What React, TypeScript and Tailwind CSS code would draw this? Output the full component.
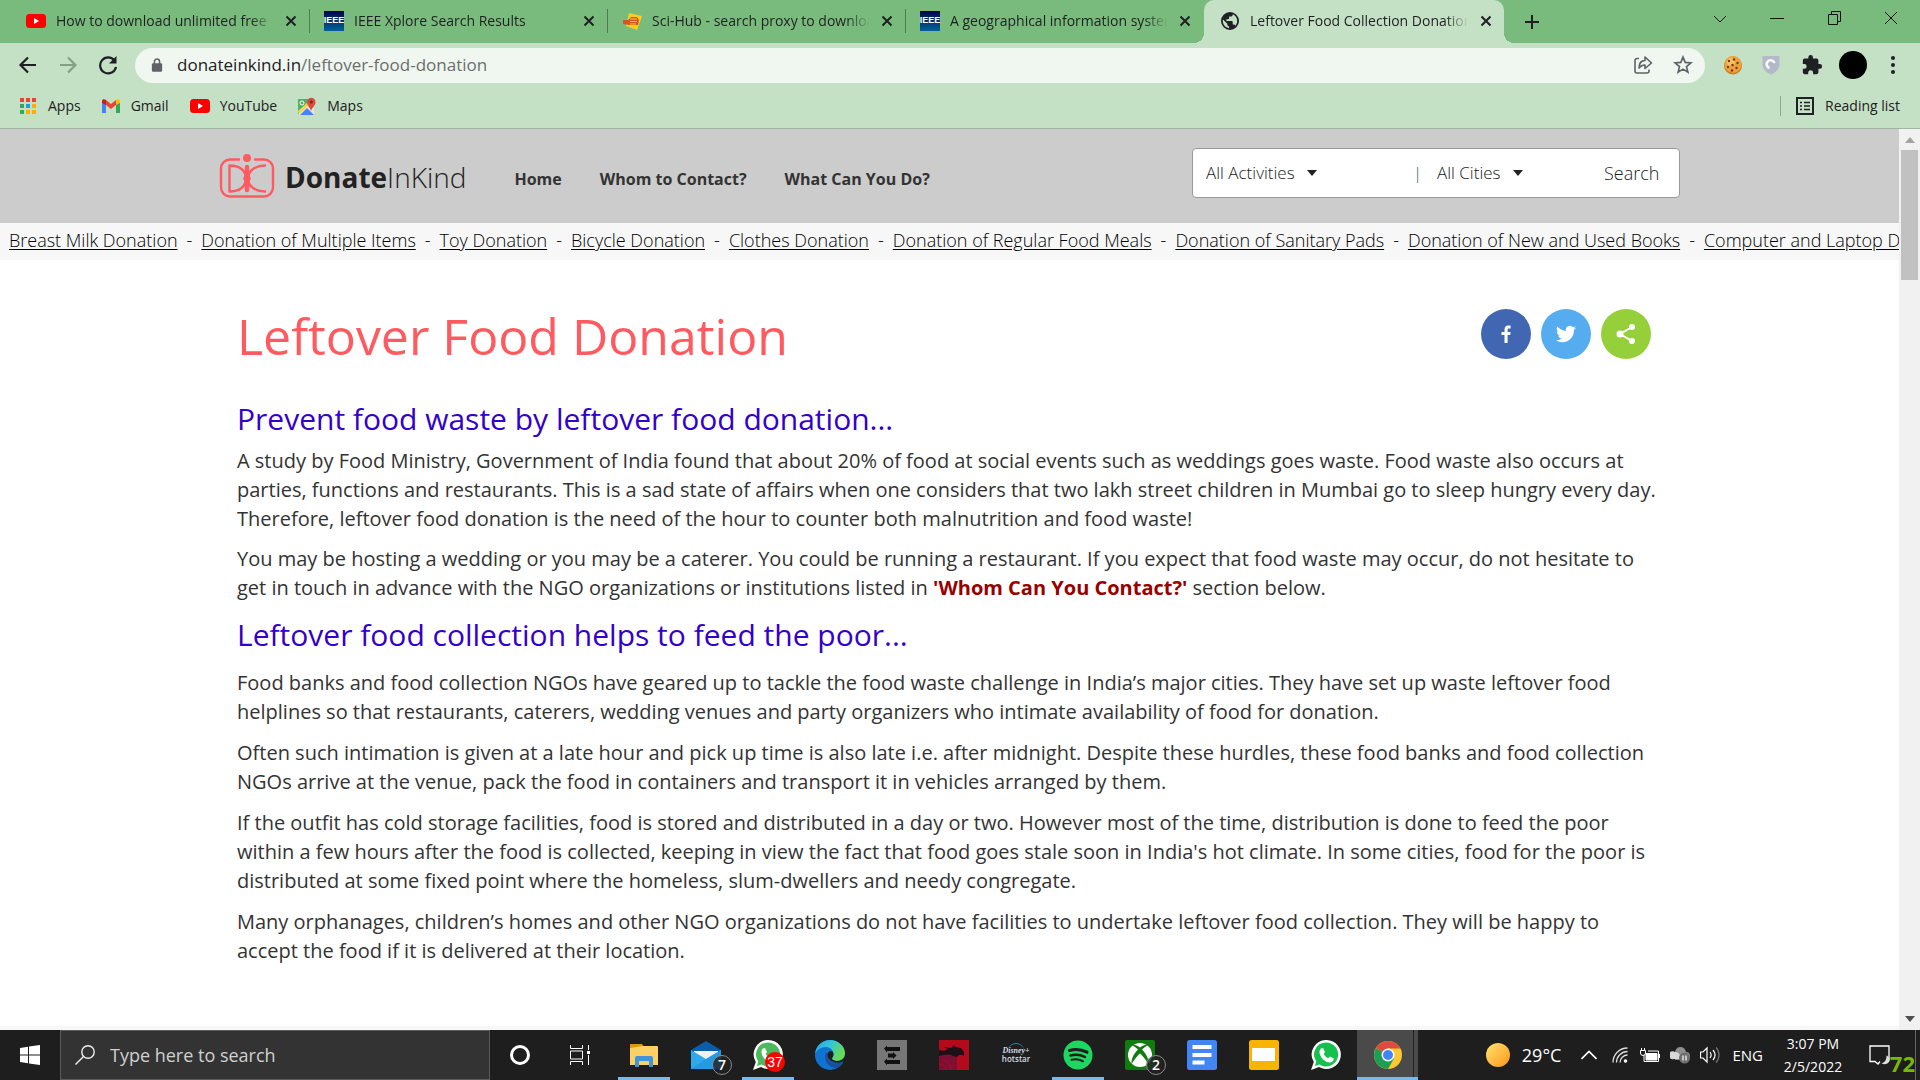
import type { ReactNode } from "react";

function YouTube({ className = "w-5 h-5" }: { className?: string }) {
  return (
    <svg viewBox="0 0 20 20" className={className} aria-hidden="true">
      <rect x="0" y="3" width="20" height="14" rx="3.5" fill="#f00" />
      <path d="M8 7v6l5-3z" fill="#fff" />
    </svg>
  );
}

function Ieee() {
  return (
    <span className="flex h-5 w-5 items-center justify-center bg-linear-to-b from-[#00004e] to-[#00629b] font-['Liberation_Sans',sans-serif] text-[9px] font-bold text-white">
      IEEE
    </span>
  );
}

function SciHub() {
  return (
    <svg viewBox="0 0 20 20" className="h-5 w-5" aria-hidden="true">
      <path d="M7 2l13 3-5 14-11-4z" fill="#f9cf1f" />
      <path d="M1 9h5l3-3h6l2 3-1 5H7l-6-1z" fill="#d9541e" />
      <path d="M8 8h7M8 10.500h7M8 13h6" stroke="#f9cf1f" strokeWidth="1" />
    </svg>
  );
}

function Globe() {
  return (
    <svg viewBox="2 2 20 20" className="h-[18px] w-[18px]" fill="#1f2023" aria-hidden="true">
      <path d="M12 2a10 10 0 1 0 0 20 10 10 0 0 0 0-20zm-1 17.930C7.050 19.440 4 16.080 4 12c0-.620.080-1.210.210-1.790L9 15v1c0 1.100.900 2 2 2v1.930zm6.900-2.540A2 2 0 0 0 16 16h-1v-3c0-.550-.450-1-1-1H8v-2h2c.550 0 1-.450 1-1V7h2c1.100 0 2-.900 2-2v-.410A8 8 0 0 1 17.900 17.390z" />
    </svg>
  );
}

function Cross({ label }: { label: string }) {
  return (
    <button aria-label={label} className="flex h-5 w-5 shrink-0 items-center justify-center">
      <svg viewBox="0 0 12 12" className="h-3 w-3" stroke="#1f2023" strokeWidth="2" aria-hidden="true">
        <path d="M1.500 1.500l9 9M10.500 1.500l-9 9" />
      </svg>
    </button>
  );
}

const tabs: { title: string; icon: ReactNode; active?: boolean }[] = [
  { title: "How to download unlimited free", icon: <YouTube /> },
  { title: "IEEE Xplore Search Results", icon: <Ieee /> },
  { title: "Sci-Hub - search proxy to download", icon: <SciHub /> },
  { title: "A geographical information system", icon: <Ieee /> },
  { title: "Leftover Food Collection Donation", icon: <Globe />, active: true },
];

function TabBar() {
  return (
    <div className="flex h-[43px] items-stretch bg-[#79bb7c] pl-3 text-[#1f2023]">
      {tabs.map((t, i) => (
        <div
          key={t.title}
          className={
            t.active
              ? "relative flex w-[300px] items-center rounded-t-[10px] bg-[#c4e1c5] pr-2 pb-0.5 pl-4"
              : "flex w-[298px] items-center pb-0.5 pl-3.5"
          }
        >
          {t.active && (
            <>
              <span className="absolute bottom-0 -left-2.5 h-2.5 w-2.5 bg-[radial-gradient(circle_at_0_0,#79bb7c_10px,#c4e1c5_10px)]" />
              <span className="absolute -right-2.5 bottom-0 h-2.5 w-2.5 bg-[radial-gradient(circle_at_100%_0,#79bb7c_10px,#c4e1c5_10px)]" />
            </>
          )}
          <span className="flex w-5 shrink-0 justify-center">{t.icon}</span>
          <span className="ml-2.5 min-w-0 flex-1 overflow-hidden text-sm whitespace-nowrap [mask-image:linear-gradient(to_right,black_195px,transparent_218px)]">
            {t.title}
          </span>
          <span className={t.active ? "ml-1" : "mr-2 ml-1"}>
            <Cross label={`Close ${t.title}`} />
          </span>
          {!t.active && <span className={i < 3 ? "h-6 w-px bg-[#4b7d4e]" : "h-6 w-px"} />}
        </div>
      ))}
      <button aria-label="New tab" className="ml-3 flex w-8 items-center justify-center">
        <svg viewBox="0 0 16 16" className="h-4 w-4" stroke="#1f2023" strokeWidth="2" aria-hidden="true">
          <path d="M8 1v14M1 8h14" />
        </svg>
      </button>
      <div className="mr-px ml-auto flex h-9">
        {[
          ["Search tabs", "M1 5l6 6 6-6"],
          ["Minimize", "M0 7.500h14"],
          ["Restore", "M1.500 3.500h9v10h-9zM4.500 3.500v-3h9v10h-3"],
          ["Close window", "M1 1l12 12M13 1L1 13"],
        ].map(([label, d]) => (
          <button key={label} aria-label={label} className="flex w-[57px] items-center justify-center">
            <svg viewBox="0 0 14 14" className="h-3.5 w-3.5" fill="none" stroke="#111" aria-hidden="true">
              <path d={d} />
            </svg>
          </button>
        ))}
      </div>
    </div>
  );
}

function Toolbar() {
  return (
    <div className="flex h-11 items-center pr-[17px] pl-[18px]">
      <button aria-label="Back" className="mr-5 h-5 w-5">
        <svg viewBox="0 0 20 20" fill="none" stroke="#1f2023" strokeWidth="2.200" aria-hidden="true">
          <path d="M18 10H3M10 2.500L2.500 10l7.500 7.500" />
        </svg>
      </button>
      <button aria-label="Forward" className="mr-5 h-5 w-5">
        <svg viewBox="0 0 20 20" fill="none" stroke="#84a086" strokeWidth="2.200" aria-hidden="true">
          <path d="M2 10h15M10 2.500l7.500 7.500-7.500 7.500" />
        </svg>
      </button>
      <button aria-label="Reload" className="mr-[17px] h-5 w-5">
        <svg viewBox="0 0 20 20" fill="none" stroke="#1f2023" strokeWidth="2.200" aria-hidden="true">
          <path d="M16.500 5.500A8 8 0 1 0 18 12" />
          <path d="M18.500 1v7.500H11z" fill="#1f2023" stroke="none" />
        </svg>
      </button>
      <form className="flex h-[35px] flex-1 items-center rounded-full bg-[#f0f7f0] pr-3">
        <svg viewBox="0 0 14 16" className="mr-3.5 ml-4 h-4 w-3" fill="#5f6368" aria-hidden="true">
          <rect x="1" y="6" width="12" height="10" rx="1.500" />
          <path d="M4 7V4a3 3 0 0 1 6 0v3" fill="none" stroke="#5f6368" strokeWidth="1.800" />
        </svg>
        <span className="flex-1 text-[17px] text-[#6a6f6d]">
          <span className="text-[#1f2023]">donateinkind.in</span>/leftover-food-donation
        </span>
        <button type="button" aria-label="Share" className="mr-5 h-5 w-5">
          <svg viewBox="0 0 20 20" fill="none" stroke="#5f6368" strokeWidth="1.600" strokeLinejoin="round" aria-hidden="true">
            <path d="M6 3.500H4a2 2 0 0 0-2 2V16a2 2 0 0 0 2 2h10a2 2 0 0 0 2-2v-1.500" />
            <path d="M6 13c0-5 2.500-7.500 6-7.500V2l6.500 6-6.500 5.500V10c-2.500 0-4.500.800-6 3z" />
          </svg>
        </button>
        <button type="button" aria-label="Bookmark" className="h-5 w-5">
          <svg viewBox="0 0 24 24" fill="none" stroke="#5f6368" strokeWidth="2" aria-hidden="true">
            <path d="M12 2.500l2.600 6.400 6.900.500-5.300 4.500 1.700 6.800-5.900-3.700-5.900 3.700 1.700-6.800L2.500 9.400l6.900-.500z" />
          </svg>
        </button>
      </form>
      <button aria-label="Cookie extension" className="ml-[18px] h-5 w-5">
        <svg viewBox="0 0 20 20" aria-hidden="true">
          <circle cx="10" cy="10.500" r="9" fill="#c77a1d" />
          <circle cx="10" cy="9.500" r="8.500" fill="#eda23c" />
          <circle cx="8" cy="7" r="4" fill="#f7c06a" />
          <g fill="#7a3b0c">
            <circle cx="6" cy="6" r="1.200" />
            <circle cx="11" cy="4.500" r="1.200" />
            <circle cx="14.500" cy="8" r="1.200" />
            <circle cx="9.500" cy="10" r="1.300" />
            <circle cx="5" cy="12" r="1.200" />
            <circle cx="13.500" cy="13" r="1.200" />
            <circle cx="9" cy="15.500" r="1.200" />
          </g>
        </svg>
      </button>
      <button aria-label="Shield extension" className="ml-[18px] h-5 w-5">
        <svg viewBox="0 0 20 20" aria-hidden="true">
          <path d="M1.500 1h17v8c0 5-3.500 8.500-8.500 10.500C5 17.500 1.500 14 1.500 9z" fill="#b4b9c9" />
          <path d="M8.500 13a4 4 0 1 1 5-5" fill="none" stroke="#fff" strokeWidth="2.400" />
        </svg>
      </button>
      <button aria-label="Extensions" className="ml-5 h-[22px] w-[22px]">
        <svg viewBox="0 0 24 24" fill="#1f2023" aria-hidden="true">
          <path d="M20.500 11H19V7a2 2 0 0 0-2-2h-4V3.500a2.500 2.500 0 0 0-5 0V5H4a2 2 0 0 0-2 2v3.800h1.500a2.700 2.700 0 0 1 0 5.400H2V20c0 1.100.900 2 2 2h3.800v-1.500a2.700 2.700 0 0 1 5.400 0V22H17a2 2 0 0 0 2-2v-4h1.500a2.500 2.500 0 0 0 0-5z" />
        </svg>
      </button>
      <button aria-label="Profile" className="ml-4 h-7 w-7 rounded-full bg-black" />
      <button aria-label="Menu" className="ml-4 h-5 w-5">
        <svg viewBox="0 0 20 20" fill="#1f2023" aria-hidden="true">
          <circle cx="10" cy="3" r="2" />
          <circle cx="10" cy="10" r="2" />
          <circle cx="10" cy="17" r="2" />
        </svg>
      </button>
    </div>
  );
}

const appColors = ["#ea4335", "#ea4335", "#ea4335", "#34a853", "#1a9bf0", "#fbaf00", "#34a853", "#fbaf00", "#fbaf00"];

function Bookmarks() {
  return (
    <div className="flex h-[42px] items-center border-b border-[#9fb7a0] px-5 pb-1 text-sm text-[#1f2023]">
      <a href="#apps" className="flex items-center gap-3">
        <span className="grid grid-cols-3 gap-0.5">
          {appColors.map((c, i) => (
            <span key={i} className="h-1 w-1" style={{ background: c }} />
          ))}
        </span>
        Apps
      </a>
      <a href="#gmail" className="ml-5 flex items-center gap-2.5">
        <svg viewBox="0 0 20 16" className="h-4 w-5" aria-hidden="true">
          <path d="M1 15V3l4 3v9z" fill="#4285f4" />
          <path d="M15 15V6l4-3v12z" fill="#34a853" />
          <path d="M5 2l5 4 5-4v5l-5 4-5-4z" fill="#ea4335" />
          <path d="M1 5V3c0-2 2.500-2.500 4-1v5z" fill="#c5221f" />
          <path d="M19 5V3c0-2-2.500-2.500-4-1v5z" fill="#fbbc04" />
        </svg>
        Gmail
      </a>
      <a href="#youtube" className="ml-[21px] flex items-center gap-2.5">
        <YouTube />
        YouTube
      </a>
      <a href="#maps" className="ml-5 flex items-center gap-2.5">
        <svg viewBox="0 0 20 20" className="h-5 w-5" aria-hidden="true">
          <rect x="1" y="3" width="16" height="16" rx="1" fill="#4caf6a" />
          <path d="M1 18L13 7l4 4v8H2z" fill="#e9e6e0" />
          <path d="M3 19l7-7 7 7z" fill="#4285f4" />
          <path d="M1 15L11 6l2 2L2 18z" fill="#fbd34a" />
          <path d="M14 16c0-4-4-6-4-10a4 4 0 0 1 8.500 0c0 4-4.500 6-4.500 10z" fill="#dd4b3e" />
          <circle cx="14.300" cy="6" r="1.500" fill="#7d241c" />
          <circle cx="5" cy="7" r="2" fill="none" stroke="#fff" />
        </svg>
        Maps
      </a>
      <button className="ml-auto flex items-center gap-2.5 border-l border-[#8fa990] pl-3.5">
        <svg viewBox="0 0 20 20" className="h-5 w-5" fill="none" stroke="#1f2023" strokeWidth="2" aria-hidden="true">
          <rect x="2" y="2" width="16" height="16" />
          <path d="M5 6.500h2M9 6.500h6M5 10h2M9 10h6M5 13.500h2M9 13.500h6" strokeWidth="1.600" />
        </svg>
        Reading list
      </button>
    </div>
  );
}

const links = [
  "Breast Milk Donation",
  "Donation of Multiple Items",
  "Toy Donation",
  "Bicycle Donation",
  "Clothes Donation",
  "Donation of Regular Food Meals",
  "Donation of Sanitary Pads",
  "Donation of New and Used Books",
  "Computer and Laptop Donation",
];

function Picker({ label, option, className }: { label: string; option: string; className: string }) {
  return (
    <label className={`relative flex items-center ${className}`}>
      <span className="sr-only">{label}</span>
      <select className="appearance-none bg-transparent pr-6 text-[17px] font-light text-[#222] [field-sizing:content]">
        <option>{option}</option>
      </select>
      <span className="pointer-events-none -ml-3 border-x-[5px] border-t-[6px] border-x-transparent border-t-[#222]" />
    </label>
  );
}

function SiteHeader() {
  return (
    <header className="bg-[#ccc]">
      <div className="mx-auto flex h-[94px] max-w-[1461px] items-center">
        <a href="#home" className="flex items-center gap-2.5">
          <svg viewBox="0 0 56 46" className="h-[46px] w-14" fill="none" stroke="#ff5a5f" strokeWidth="2.400" strokeLinecap="round" aria-hidden="true">
            <path d="M20 6.500H11a9 9 0 0 0-9 9v19a9 9 0 0 0 9 9h34a9 9 0 0 0 9-9v-19a9 9 0 0 0-9-9h-9" />
            <path d="M10.500 12.500v26M10.500 12.500c10 0 16.500 5 16.500 13s-6.500 13-16.500 13M46 12.500C36 12.500 29 18 29 25.500s7 13 17 13" />
            <path d="M28 14v23" strokeWidth="4.500" />
            <path d="M28 18l4 7.500-4 7.500-4-7.500z" fill="#ff5a5f" stroke="none" />
            <circle cx="28" cy="5" r="4" fill="#ff5a5f" stroke="none" />
          </svg>
          <span className="pt-0.5 text-[28px] leading-9 font-light text-[#222]">
            <b className="font-bold">Donate</b>InKind
          </span>
        </a>
        <nav className="ml-12 flex gap-[38px] pt-1.5 text-base font-bold text-[#333]">
          <a href="#home">Home</a>
          <a href="#contact">Whom to Contact?</a>
          <a href="#do">What Can You Do?</a>
        </nav>
        <form className="mb-1.5 ml-auto flex h-[50px] w-[488px] items-center rounded border border-[#999] bg-white px-[13px] text-[17px] font-light text-[#222]">
          <Picker label="Activities" option="All Activities" className="w-[207px]" />
          <span className="w-6 text-[#555]">|</span>
          <Picker label="Cities" option="All Cities" className="w-[167px]" />
          <button type="button" className="text-[18px]">Search</button>
        </form>
      </div>
    </header>
  );
}

function Article() {
  return (
    <article className="mx-auto max-w-[1425px] pt-[38px] text-[20px] leading-[29px] text-[#333]">
      <div className="flex items-start justify-between pr-[11px]">
        <h1 className="text-[50px] leading-[76px] text-[#ff5a5f]">Leftover Food Donation</h1>
        <div className="flex gap-2.5 pt-[11px]">
          <a href="#facebook" aria-label="Facebook" className="flex h-[50px] w-[50px] items-center justify-center rounded-full bg-[#4267b2]">
            <svg viewBox="0 0 18 18" className="h-[18px] w-[18px]" fill="#fff" aria-hidden="true">
              <path d="M7.500 18v-8H4.500V7h3V4.800C7.500 2 9 .600 11.500.600c1 0 1.900.1 2.100.1v2.700h-1.500c-1.200 0-1.500.600-1.500 1.500V7h3l-.400 3h-2.600v8z" />
            </svg>
          </a>
          <a href="#twitter" aria-label="Twitter" className="flex h-[50px] w-[50px] items-center justify-center rounded-full bg-[#55acee]">
            <svg viewBox="0 0 24 24" className="h-5 w-5" fill="#fff" aria-hidden="true">
              <path d="M24 4.557a9.800 9.800 0 0 1-2.828.775 4.900 4.900 0 0 0 2.165-2.724 9.900 9.900 0 0 1-3.127 1.195 4.920 4.920 0 0 0-8.384 4.482A13.980 13.980 0 0 1 1.671 3.149a4.920 4.920 0 0 0 1.523 6.574 4.900 4.900 0 0 1-2.229-.616c-.054 2.281 1.581 4.415 3.949 4.890a4.900 4.900 0 0 1-2.224.084 4.930 4.930 0 0 0 4.600 3.419A9.900 9.900 0 0 1 0 19.540a13.940 13.940 0 0 0 7.548 2.212c9.142 0 14.307-7.721 13.995-14.646A10 10 0 0 0 24 4.557z" />
            </svg>
          </a>
          <a href="#share" aria-label="Share" className="flex h-[50px] w-[50px] items-center justify-center rounded-full bg-[#95d03a]">
            <svg viewBox="0 0 20 20" className="h-5 w-5" fill="#fff" stroke="#fff" strokeWidth="2" aria-hidden="true">
              <path d="M16 3L4 10l12 7" fill="none" />
              <circle cx="16" cy="3" r="2" />
              <circle cx="4" cy="10" r="2.500" />
              <circle cx="16" cy="17" r="2" />
            </svg>
          </a>
        </div>
      </div>
      <h2 className="mt-6 text-[30px] leading-[42px] text-[#3300cc]">Prevent food waste by leftover food donation...</h2>
      <div className="mt-1.5 flex flex-col gap-[11px]">
        <p>
          A study by Food Ministry, Government of India found that about 20% of food at social events such as weddings
          goes waste. Food waste also occurs at parties, functions and restaurants. This is a sad state of affairs when
          one considers that two lakh street children in Mumbai go to sleep hungry every day. Therefore, leftover food
          donation is the need of the hour to counter both malnutrition and food waste!
        </p>
        <p>
          You may be hosting a wedding or you may be a caterer. You could be running a restaurant. If you expect that
          food waste may occur, do not hesitate to get in touch in advance with the NGO organizations or institutions
          listed in <b className="text-[#990000]">'Whom Can You Contact?'</b> section below.
        </p>
      </div>
      <h2 className="mt-3 text-[30px] leading-[42px] text-[#3300cc]">Leftover food collection helps to feed the poor...</h2>
      <div className="mt-3 flex flex-col gap-3">
        <p>
          Food banks and food collection NGOs have geared up to tackle the food waste challenge in India’s major cities.
          They have set up waste leftover food helplines so that restaurants, caterers, wedding venues and party
          organizers who intimate availability of food for donation.
        </p>
        <p>
          Often such intimation is given at a late hour and pick up time is also late i.e. after midnight. Despite these
          hurdles, these food banks and food collection NGOs arrive at the venue, pack the food in containers and
          transport it in vehicles arranged by them.
        </p>
        <p>
          If the outfit has cold storage facilities, food is stored and distributed in a day or two. However most of the
          time, distribution is done to feed the poor within a few hours after the food is collected, keeping in view
          the fact that food goes stale soon in India's hot climate. In some cities, food for the poor is distributed at
          some fixed point where the homeless, slum-dwellers and needy congregate.
        </p>
        <p>
          Many orphanages, children’s homes and other NGO organizations do not have facilities to undertake leftover
          food collection. They will be happy to accept the food if it is delivered at their location.
        </p>
      </div>
    </article>
  );
}

function Badge({ children }: { children: ReactNode }) {
  return (
    <span className="absolute -right-[11px] -bottom-[5px] flex h-5 w-5 items-center justify-center rounded-full border border-[#8a8a8a] bg-[#222]/80 text-sm font-semibold text-white">
      {children}
    </span>
  );
}

function WhatsApp({ muted }: { muted?: boolean }) {
  return (
    <svg viewBox="0 0 30 30" className="h-[30px] w-[30px]" aria-hidden="true">
      <path d="M15.500 0A14.500 14.500 0 1 1 8 27L0 30l2.800-8A14.500 14.500 0 0 1 15.500 0z" fill="#fff" />
      <path d="M15.500 2.500A12 12 0 1 1 8.500 24.500L3.800 26l1.600-4.500A12 12 0 0 1 15.500 2.500z" fill={muted ? "#4cb95c" : "#16c04c"} />
      <path d="M10 8.500l2-.500 2 4-1.300 2c1 2 2.500 3.300 4.500 4.200l1.800-1.700 3.800 2c0 2.500-2 4-4 4C13.500 22.500 8 16 8.500 11.500c.2-1.300.8-2.400 1.500-3z" fill="#fff" />
    </svg>
  );
}

const apps: { name: string; icon: ReactNode; open?: boolean; current?: boolean; tool?: boolean }[] = [
  {
    name: "Cortana",
    tool: true,
    icon: <span className="h-5 w-5 rounded-full border-3 border-white" />,
  },
  {
    name: "Task View",
    tool: true,
    icon: (
      <svg viewBox="0 0 20 20" className="h-5 w-5" fill="none" stroke="#fff" aria-hidden="true">
        <path d="M.5 0v3.500h12V0M.5 20v-3.500h12V20M.5 6h12v8H.500zM18.500 0v5M18.500 10v10" />
        <path d="M17 6h3v3h-3z" fill="#fff" stroke="none" />
      </svg>
    ),
  },
  {
    name: "File Explorer",
    open: true,
    icon: (
      <svg viewBox="0 0 30 26" className="h-[26px] w-[30px]" aria-hidden="true">
        <path d="M1 2h12l2 3v6H1z" fill="#dc9a0a" />
        <path d="M1 6l13-2h14a1 1 0 0 1 1 1v18H1z" fill="#fdd066" />
        <path d="M6 25v-9a2 2 0 0 1 2-2h14a2 2 0 0 1 2 2v9h-4v-6H10v6z" fill="#3f94dd" />
      </svg>
    ),
  },
  {
    name: "Mail",
    icon: (
      <span className="relative">
        <svg viewBox="0 0 30 30" className="h-[30px] w-[30px]" aria-hidden="true">
          <path d="M0 10L15 1l15 9v3H0z" fill="#0b5cab" />
          <path d="M3 11h24v9H3z" fill="#f1f1f1" />
          <path d="M0 10l15 9 15-9v19H0z" fill="#2fa9ea" />
          <path d="M0 29l15-10 15-9v19z" fill="#1f8fdc" opacity=".6" />
        </svg>
        <Badge>7</Badge>
      </span>
    ),
  },
  {
    name: "WhatsApp",
    open: true,
    icon: (
      <span className="relative">
        <WhatsApp muted />
        <span className="absolute -right-0.5 -bottom-0.5 flex h-5 w-5 items-center justify-center rounded-full bg-[#f00] font-['Liberation_Sans',sans-serif] text-sm text-white">
          37
        </span>
      </span>
    ),
  },
  {
    name: "Edge",
    icon: (
      <svg viewBox="0 0 30 30" className="h-[30px] w-[30px]" aria-hidden="true">
        <defs>
          <linearGradient id="edgeTop" x1="0" x2="1" y1="0" y2=".4">
            <stop offset="0" stopColor="#2a9fe0" />
            <stop offset=".5" stopColor="#35c4dc" />
            <stop offset="1" stopColor="#66dc50" />
          </linearGradient>
        </defs>
        <circle cx="15" cy="15" r="15" fill="#0e74cf" />
        <path d="M0 14C1 5 8 0 15 0c8 0 15 6 15 13 0 5-4 8-8 8-3 0-5-1-5-2.500 0-1 1.500-1.500 1.500-4.500C18.500 10 15 7 11 7 6 7 2 10 0 14z" fill="url(#edgeTop)" />
        <path d="M11 12c-3 8 2 16 11 16 3-1.500 5.500-4 6.500-6.500-3 1.500-6 2-9 1.500-4-.800-7-4-6.500-8z" fill="#1b4f9e" />
        <path d="M12.500 15c0-2.500 1.500-4 3.500-4 1.500 0 2.500 1.500 2.500 3 0 3-1.500 3.500-1.500 4.500 0 1.500 2 2.500 5 2.500 3.500 0 6-1.500 8-4.500V22l-2-.500c-3 1.500-6 1.500-8 1-4-.900-7.500-4-7.500-7.500z" fill="#1e1e1e" />
      </svg>
    ),
  },
  {
    name: "Epic",
    icon: (
      <svg viewBox="0 0 30 30" className="h-[30px] w-[30px]" aria-hidden="true">
        <path d="M0 0h30v30H0z" fill="#777" />
        <path d="M7 8.500l3-3v1.500h13v4H10v1.500zM7 21.500l3-3V20h13v4H10v1.500zM11 13.500h5v-1.500l3.500 3.500L16 19v-1.500h-5z" fill="#111" />
      </svg>
    ),
  },
  {
    name: "Dragon Center",
    icon: (
      <svg viewBox="0 0 30 30" className="h-[30px] w-[30px]" aria-hidden="true">
        <path d="M0 0h30v30H0z" fill="#b5091c" />
        <path d="M0 17c7-5 13-5 18 0v13H0z" fill="#7c1034" />
        <path d="M0 10l5 1 4-2-5-2 8 1 3-3 1 2 6 1 3 4v4l-2-1-3 0-2 2-4-1c-5-3-9-1-14 0z" fill="#1f0f17" />
        <path d="M3 20c6 0 9 4 9 10M0 24c4 0 6 2 7 6" fill="none" stroke="#b5091c" />
      </svg>
    ),
  },
  {
    name: "Disney+ Hotstar",
    icon: (
      <span className="relative flex flex-col items-center text-[8px] leading-[8px] font-semibold text-[#d5dde5]">
        <span className="absolute -top-1 h-3 w-4 rounded-t-full border-t border-[#2a7f9d]" />
        <i className="font-['Liberation_Serif',serif]">Disney+</i>
        <span>hotstar</span>
      </span>
    ),
  },
  {
    name: "Spotify",
    open: true,
    icon: (
      <svg viewBox="0 0 30 30" className="h-[30px] w-[30px]" fill="none" stroke="#1e1e1e" strokeLinecap="round" aria-hidden="true">
        <circle cx="15" cy="15" r="14.500" fill="#1ed760" stroke="none" />
        <path d="M6.500 10.500c6-1.700 12-1.200 17.500 1.700" strokeWidth="3" />
        <path d="M7.500 15.500c5-1.400 10-.800 14.500 1.500" strokeWidth="2.500" />
        <path d="M8.500 19.800c4-1 8-.500 11.500 1.500" strokeWidth="2" />
      </svg>
    ),
  },
  {
    name: "Xbox",
    icon: (
      <span className="relative">
        <svg viewBox="0 0 30 30" className="h-[30px] w-[30px]" aria-hidden="true">
          <rect width="30" height="30" rx="2" fill="#107c10" />
          <circle cx="15" cy="15" r="12" fill="#fff" />
          <path d="M7 5c3-1 6 1 8 2.500C17 6 20 4 23 5c-2 1-4 3-6 4.500 4 4 7 9 6.500 15C22 21 18 16 15 13.500 12 16 8 21 6.500 24.500 6 18.500 9 13.500 13 9.500 11 8 9 6 7 5z" fill="#107c10" />
        </svg>
        <Badge>2</Badge>
      </span>
    ),
  },
  {
    name: "Docs",
    icon: (
      <svg viewBox="0 0 30 30" className="h-[30px] w-[30px]" aria-hidden="true">
        <rect width="30" height="30" rx="2.500" fill="#4285f4" />
        <path d="M5.500 5h19v4h-19zM5.500 13h19v4h-19zM5.500 20.500h12v4h-12z" fill="#fff" />
      </svg>
    ),
  },
  {
    name: "Slides",
    icon: (
      <svg viewBox="0 0 30 30" className="h-[30px] w-[30px]" aria-hidden="true">
        <rect width="30" height="30" rx="2.500" fill="#f8b400" />
        <path d="M3 8h23v13H3z" fill="#fff" />
      </svg>
    ),
  },
  { name: "WhatsApp Web", icon: <WhatsApp /> },
  {
    name: "Chrome",
    open: true,
    current: true,
    icon: (
      <svg viewBox="0 0 30 30" className="h-[30px] w-[30px]" aria-hidden="true">
        <circle cx="15" cy="15" r="14" fill="#fcc934" />
        <path d="M15 15L2.900 8A14 14 0 0 0 15 29l6-10.500z" fill="#1e9e54" />
        <path d="M15 15L2.900 8A14 14 0 0 1 27.500 8.500H15z" fill="#dd4a3e" />
        <circle cx="15" cy="15" r="6.500" fill="#fff" />
        <circle cx="15" cy="15" r="5" fill="#4285f4" />
      </svg>
    ),
  },
];

function AppButton({ app }: { app: (typeof apps)[number] }) {
  return (
    <button
      aria-label={app.name}
      className={
        app.current
          ? "relative flex w-[61px] items-center justify-center border-b-3 border-[#76b9ed] bg-[#4a4a4a] pt-0.5"
          : app.open
            ? "mx-[5px] flex w-[52px] items-center justify-center border-b-3 border-[#76b9ed] pt-[3px]"
            : app.tool
              ? "flex w-[60px] items-center justify-center"
              : "flex w-[62px] items-center justify-center"
      }
    >
      {app.icon}
      {app.current && <span className="absolute inset-y-0 right-1 w-px bg-[#222]" />}
    </button>
  );
}

function Taskbar() {
  return (
    <footer className="flex h-[50px] items-stretch bg-[#1e1e1e] text-white">
      <button aria-label="Start" className="flex w-[60px] items-center justify-center">
        <svg viewBox="0 0 20 20" className="h-5 w-5" fill="#fff" aria-hidden="true">
          <path d="M0 3l8-1.200v7.700H0zM9 1.600L20 0v9.500H9zM0 10.500h8v7.700L0 17zM9 10.500h11V20L9 18.400z" />
        </svg>
      </button>
      <label className="flex w-[430px] items-center border border-[#5a5a5a] bg-[#333] pl-3.5">
        <svg viewBox="0 0 20 20" className="h-5 w-5" fill="none" stroke="#eee" strokeWidth="1.400" aria-hidden="true">
          <circle cx="13" cy="7" r="6.200" />
          <path d="M8.500 11.500L.500 19.500" />
        </svg>
        <input
          aria-label="Search"
          placeholder="Type here to search"
          className="ml-[15px] min-w-0 flex-1 bg-transparent text-[18px] text-white outline-none placeholder:text-[#d0d0d0]"
        />
      </label>
      <div className="mr-[3px] flex">
        {apps.filter((a) => a.tool).map((a) => <AppButton key={a.name} app={a} />)}
      </div>
      <div className="flex">
        {apps.filter((a) => !a.tool).map((a) => <AppButton key={a.name} app={a} />)}
      </div>
      <div className="ml-auto flex items-center">
        <span className="h-6 w-6 rounded-full bg-linear-135 from-[#ffe36b] to-[#ff9500]" />
        <span className="ml-3 text-[18px]">29°C</span>
        <svg viewBox="0 0 16 10" className="ml-5 h-2.5 w-4" fill="none" stroke="#fff" strokeWidth="1.600" aria-hidden="true">
          <path d="M.5 9L8 1.500 15.500 9" />
        </svg>
        <svg viewBox="0 0 16 16" className="ml-[15px] h-4 w-4" fill="none" stroke="#ddd" strokeWidth="1.300" aria-hidden="true">
          <path d="M1 15.500C1 7.500 7.500 1 15.500 1M4.500 15.500c0-6 5-11 11-11M8 15.500C8 11.500 11.500 8 15.500 8" />
          <circle cx="13.500" cy="14" r="1.800" fill="#fff" stroke="none" />
        </svg>
        <svg viewBox="0 0 20 14" className="ml-3 h-3.5 w-5" fill="none" stroke="#fff" aria-hidden="true">
          <path d="M4 7v6.500h14.500V3H8" />
          <path d="M6 5.500h11V12H6z" fill="#fff" />
          <path d="M19.500 6v4M1.500 0v2.500M4.500 0v2.500M.5 2.500h5V5a2.500 2.500 0 0 1-5 0z" />
        </svg>
        <svg viewBox="0 0 20 18" className="ml-2.5 h-[18px] w-5" aria-hidden="true">
          <path d="M5 7a5.500 5.500 0 0 1 11-1 4 4 0 0 1 0 8H5z" fill="#8f8f8f" />
          <path d="M4 13a4 4 0 1 1 1-7c4 0 5 3 7 7z" fill="#d8d8d8" />
          <circle cx="14.500" cy="12" r="5.500" fill="#6f6f6f" />
          <path d="M13 9.500v5M16 9.500v5" stroke="#fff" strokeWidth="1.200" />
        </svg>
        <svg viewBox="0 0 20 18" className="ml-2.5 h-[18px] w-5" fill="none" stroke="#fff" strokeWidth="1.200" aria-hidden="true">
          <path d="M.5 6v6H3l4 4V2L3 6z" />
          <path d="M10 6c1.500 2 1.500 4 0 6M13 4c2.500 3 2.500 7 0 10" />
          <path d="M16 1.500c4 4 4 11 0 15" stroke="#777" />
        </svg>
        <span className="ml-3 text-[15px]">ENG</span>
        <span className="ml-5 flex w-[60px] flex-col items-center text-sm leading-[23px] whitespace-nowrap">
          <span>3:07 PM</span>
          <span>2/5/2022</span>
        </span>
        <button aria-label="Notifications" className="relative ml-[26px] h-5 w-[46px]">
          <svg viewBox="0 0 22 20" className="h-5 w-[22px]" fill="none" stroke="#fff" strokeWidth="1.300" aria-hidden="true">
            <path d="M11 16.500l-2 2.500-3-2.500H1V1h19v12" />
            <path d="M17.500 10.500c0 5-2 7-5 8 5 2 8.500-1 8.500-5-1-1.500-2-2.500-3.500-3z" fill="#ddd" stroke="none" />
          </svg>
          <span className="absolute top-1.5 right-0 text-[22px] leading-6 font-bold text-[#76b900]">72</span>
        </button>
        <span className="mr-1 h-[50px] w-px bg-[#666]" />
      </div>
    </footer>
  );
}

export default function App() {
  return (
    <div className="flex h-screen flex-col overflow-hidden bg-white font-['Open_Sans',sans-serif]">
      <div className="bg-[#c4e1c5]">
        <TabBar />
        <Toolbar />
        <Bookmarks />
      </div>
      <div className="flex min-h-0 flex-1">
        <main className="min-w-0 flex-1 overflow-hidden border-b-4 border-[#f7f7f7]">
          <SiteHeader />
          <div className="flex h-[37px] items-center overflow-hidden bg-[#f7f7f7] pb-0.5 pl-[9px] text-[18px] font-light whitespace-nowrap text-black">
            {links.map((l, i) => (
              <span key={l}>
                {i > 0 && <span className="px-[9px]">-</span>}
                <a href="#category" className="underline underline-offset-2">{l}</a>
              </span>
            ))}
          </div>
          <Article />
        </main>
        <div className="flex w-[21px] flex-col items-center bg-[#f1f1f1]">
          <span className="mt-2 border-x-[5px] border-b-[6px] border-x-transparent border-b-[#a3a3a3]" />
          <span className="mt-[7px] h-[130px] w-[17px] bg-[#c1c1c1]" />
          <span className="mt-auto mb-2 border-x-[5px] border-t-[6px] border-x-transparent border-t-[#505050]" />
        </div>
      </div>
      <Taskbar />
    </div>
  );
}
